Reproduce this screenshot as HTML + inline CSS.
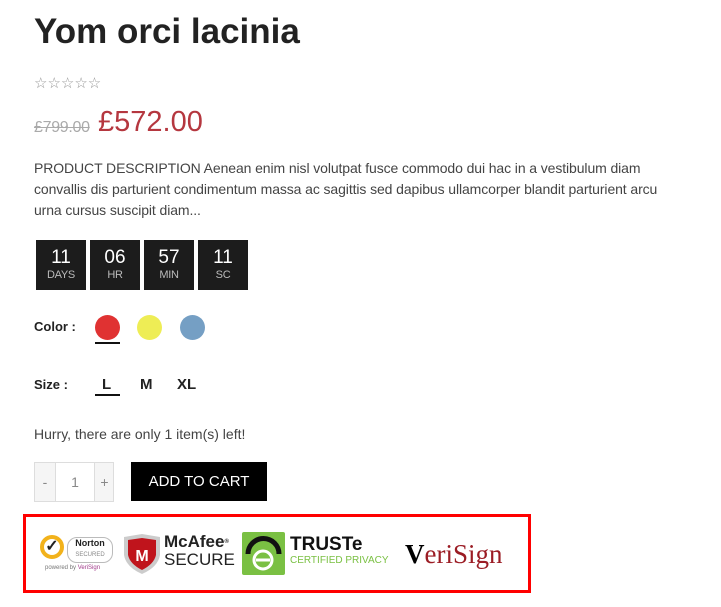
<!DOCTYPE html>
<html><head><style>
body{margin:0;background:#fff;font-family:"Liberation Sans",sans-serif;color:#333;width:721px;height:607px;overflow:hidden;position:relative}
.a{position:absolute;white-space:nowrap}
.cd{position:absolute;top:240px;width:50px;height:50px;background:#1c1c1c;color:#fff;text-align:center}
.cd b{display:block;font-weight:normal;font-size:19px;margin-top:8px;line-height:20px}
.cd i{display:block;font-style:normal;font-size:11px;color:#bbb;line-height:14px;letter-spacing:-0.3px}
.c{position:absolute;width:25px;height:25px;border-radius:50%;top:315px}
</style></head><body>
<div class="a" style="left:34px;top:12px;font-size:35px;font-weight:bold;color:#222">Yom orci lacinia</div>
<div class="a" style="left:34px;top:74px;font-size:15px;color:#999;letter-spacing:0px">☆☆☆☆☆</div>
<div class="a" style="left:34px;top:119px;font-size:16px;color:#aaa;text-decoration:line-through;letter-spacing:-0.3px">£799.00</div>
<div class="a" style="left:98px;top:106px;font-size:29px;color:#b5373f">£572.00</div>
<div class="a" style="left:34px;top:158px;font-size:14px;line-height:21px;color:#444;white-space:normal;width:628px;letter-spacing:-0.1px">PRODUCT DESCRIPTION Aenean enim nisl volutpat fusce commodo dui hac in a vestibulum diam convallis dis parturient condimentum massa ac sagittis sed dapibus ullamcorper blandit parturient arcu urna cursus suscipit diam...</div>
<div class="cd" style="left:36px"><b>11</b><i>DAYS</i></div>
<div class="cd" style="left:90px"><b>06</b><i>HR</i></div>
<div class="cd" style="left:144px"><b>57</b><i>MIN</i></div>
<div class="cd" style="left:198px"><b>11</b><i>SC</i></div>
<div class="a" style="left:34px;top:319px;font-size:13px;font-weight:bold;color:#222">Color :</div>
<div class="c" style="left:95px;background:#e03232"></div>
<div class="c" style="left:137px;background:#eeed55"></div>
<div class="c" style="left:180px;background:#759fc4"></div>
<div class="a" style="left:95px;top:342px;width:25px;height:2px;background:#111"></div>
<div class="a" style="left:34px;top:377px;font-size:13px;font-weight:bold;color:#222">Size :</div>
<div class="a" style="left:102px;top:376px;font-size:15px;font-weight:bold;color:#222">L</div>
<div class="a" style="left:140px;top:376px;font-size:15px;font-weight:bold;color:#222">M</div>
<div class="a" style="left:177px;top:376px;font-size:15px;font-weight:bold;color:#222">XL</div>
<div class="a" style="left:95px;top:394px;width:25px;height:2px;background:#111"></div>
<div class="a" style="left:34px;top:426px;font-size:14px;color:#444">Hurry, there are only 1 item(s) left!</div>
<div class="a" style="left:34px;top:462px;width:78px;height:38px;border:1px solid #ddd;font-size:14px;color:#888;overflow:hidden">
<div class="a" style="left:0;top:0;width:20px;height:38px;background:#f5f5f5;border-right:1px solid #ddd;text-align:center;line-height:38px">-</div>
<div class="a" style="left:21px;top:0;width:38px;text-align:center;line-height:38px">1</div>
<div class="a" style="left:59px;top:0;width:19px;height:38px;background:#f5f5f5;border-left:1px solid #ddd;text-align:center;line-height:38px">+</div></div>
<div class="a" style="left:131px;top:462px;width:136px;height:39px;background:#000;color:#fff;font-size:15px;text-align:center;line-height:39px">ADD TO CART</div>
<div class="a" style="left:23px;top:514px;width:502px;height:73px;border:3px solid #f00"></div>
<div class="a" style="left:40px;top:535px;width:24px;height:24px;border-radius:50%;border:4px solid #f2b21b;box-sizing:border-box;color:#222;font-size:16px;font-weight:bold;text-align:center;line-height:16px">✓</div>
<div class="a" style="left:67px;top:537px;width:44px;height:24px;border:1px solid #bbb;border-radius:10px;font-size:9px;font-weight:bold;text-align:center;line-height:10px;color:#222">Norton<br><span style="font-size:6px;color:#888;font-weight:normal">SECURED</span></div>
<div class="a" style="left:45px;top:565px;font-size:6px;color:#777">powered by <span style="color:#a03a8a">VeriSign</span></div>
<svg class="a" style="left:122px;top:533px" width="40" height="42"><path d="M2 4 L20 1 L38 4 L38 22 Q36 34 20 41 Q4 34 2 22Z" fill="#ccc"/><path d="M6 7 L20 5 L34 7 L34 22 Q32 31 20 37 Q8 31 6 22Z" fill="#c0141c"/><text x="20" y="28" font-size="16" font-weight="bold" fill="#fff" text-anchor="middle" font-family="Liberation Sans">M</text></svg>
<div class="a" style="left:164px;top:533px;font-size:17px;font-weight:bold;color:#222;line-height:18px">McAfee<span style="font-size:6px;vertical-align:top">®</span><br><span style="font-weight:normal;font-size:17px">SECURE</span></div>
<div class="a" style="left:242px;top:532px;width:43px;height:43px;background:#7ac043;border-radius:2px"></div>
<svg class="a" style="left:242px;top:532px" width="43" height="43"><path d="M6 22 A15 15 0 0 1 37 22" stroke="#111" stroke-width="5" fill="none"/><circle cx="21" cy="28" r="9" stroke="#fff" stroke-width="3" fill="none"/><path d="M14 28 H28" stroke="#fff" stroke-width="3"/></svg>
<div class="a" style="left:290px;top:535px;font-size:19px;font-weight:bold;color:#111;line-height:20px">TRUSTe</div>
<div class="a" style="left:290px;top:555px;font-size:10px;color:#7ac043">CERTIFIED PRIVACY</div>
<div class="a" style="left:405px;top:539px;font-family:'Liberation Serif',serif;font-size:27px;color:#9b1c24"><span style="color:#000;font-weight:bold">V</span>eriSign</div>
</body></html>
